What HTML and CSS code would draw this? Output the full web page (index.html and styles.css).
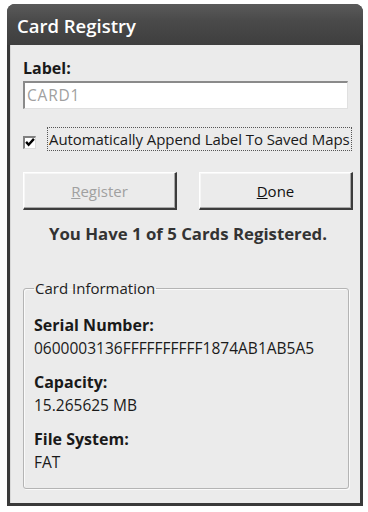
FILE: index.html
```html
<!DOCTYPE html>
<html>
<head>
<meta charset="utf-8">
<link rel="stylesheet" href="styles.css">
</head>
<body>
<div class="window">
  <div class="titlebar">Card Registry</div>
  <div class="client">
    <div class="field-label">Label:</div>
    <div class="textbox">CARD1</div>
    <div class="check-row">
      <span class="checkbox"><svg width="11" height="11" viewBox="0 0 11 11"><path d="M1.2 4.8 L4 8 L9.8 1.5" fill="none" stroke="#000" stroke-width="2.6"/></svg></span>
      <span class="check-text">Automatically Append Label To Saved Maps</span>
    </div>
    <div class="buttons">
      <div class="btn disabled"><span class="u">R</span>egister</div>
      <div class="btn"><span class="u">D</span>one</div>
    </div>
    <div class="status">You Have 1 of 5 Cards Registered.</div>
    <fieldset class="group">
      <legend>Card Information</legend>
      <div class="info-label">Serial Number:</div>
      <div class="info-value">0600003136FFFFFFFFFF1874AB1AB5A5</div>
      <div class="info-label">Capacity:</div>
      <div class="info-value">15.265625 MB</div>
      <div class="info-label">File System:</div>
      <div class="info-value">FAT</div>
    </fieldset>
  </div>
</div>
</body>
</html>
```

FILE: styles.css
```css
html, body {
  margin: 0;
  padding: 0;
  background: #ffffff;
}
body {
  font-family: "Open Sans", "DejaVu Sans", sans-serif;
  color: #1a1a1a;
}
.window {
  margin: 4px 0 0 7px;
  width: 356px;
  height: 502px;
  box-sizing: border-box;
  display: flex;
  flex-direction: column;
  background: #3a3a3a;
  border-radius: 8px 8px 0 0;
  padding: 0 3px 3px 3px;
}
.titlebar {
  height: 41px;
  box-sizing: border-box;
  margin: 0 -3px;
  padding: 9px 0 0 10px;
  color: #ffffff;
  font-size: 18.5px;
  font-weight: 600;
  line-height: 26px;
  background: linear-gradient(#5a5a5a, #4a4a4a 40%, #3e3e3e);
  border-radius: 8px 8px 0 0;
}
.client {
  flex: 1;
  background: #ebebeb;
  border-left: 1px solid #d8d8d8;
  padding: 13px 4px 14px 12px;
  display: flex;
  flex-direction: column;
}
.field-label {
  font-size: 16px;
  font-weight: 700;
  line-height: 21px;
}
.textbox {
  margin-top: 2px;
  width: 325px;
  height: 28px;
  box-sizing: border-box;
  background: #fff;
  border-top: 2px solid #8a8a8a;
  border-left: 2px solid #8a8a8a;
  border-right: 1px solid #e0e0e0;
  border-bottom: 1px solid #e0e0e0;
  color: #a0a0a0;
  font-size: 15.5px;
  letter-spacing: 0.8px;
  line-height: 24px;
  padding-left: 2px;
}
.check-row {
  margin-top: 18px;
  display: flex;
  align-items: center;
  height: 24px;
}
.checkbox {
  flex: none;
  width: 13px;
  height: 13px;
  box-sizing: border-box;
  background: #fff;
  border-top: 2px solid #808080;
  border-left: 2px solid #808080;
  border-right: 1px solid #dcdcdc;
  border-bottom: 1px solid #dcdcdc;
  display: flex;
  align-items: center;
  justify-content: center;
  margin-top: 6px;
}
.check-text {
  margin-left: 11px;
  font-size: 15px;
  line-height: 20px;
  padding: 1px;
  border: 1px dotted #555;
  white-space: nowrap;
  letter-spacing: -0.08px;
}
.buttons {
  margin-top: 21px;
  display: flex;
  gap: 22px;
}
.btn {
  width: 154px;
  height: 38px;
  box-sizing: border-box;
  display: flex;
  align-items: center;
  justify-content: center;
  font-size: 15px;
  border-top: 1px solid #ffffff;
  border-left: 1px solid #ffffff;
  border-right: 2px solid #3c3c3c;
  border-bottom: 2px solid #3c3c3c;
  box-shadow: inset -1px -1px 0 #a8a8a8, inset 1px 1px 0 #f6f6f6;
  background: #ebebeb;
  color: #111;
}
.btn.disabled {
  color: #a0a0a0;
}
.u {
  text-decoration: underline;
}
.status {
  margin-top: 13px;
  width: 330px;
  text-align: center;
  font-size: 16.8px;
  font-weight: 700;
  color: #333;
  line-height: 22px;
}
.group {
  margin: 34px 0 0 0;
  width: 326px;
  box-sizing: border-box;
  flex: 1;
  border: 1px solid #b4b4b4;
  box-shadow: 1px 1px 0 #fafafa, inset 1px 1px 0 #fafafa;
  border-radius: 3px;
  padding: 18px 10px 0 10px;
  min-width: 0;
}
.group legend {
  font-size: 15px;
  padding: 0 1px;
  margin-left: 0;
  color: #222;
  line-height: 18px;
}
.info-label {
  font-size: 16px;
  font-weight: 700;
  line-height: 20px;
}
.info-value {
  font-size: 15.5px;
  line-height: 20px;
  margin-top: 3px;
  margin-bottom: 14px;
}
```
